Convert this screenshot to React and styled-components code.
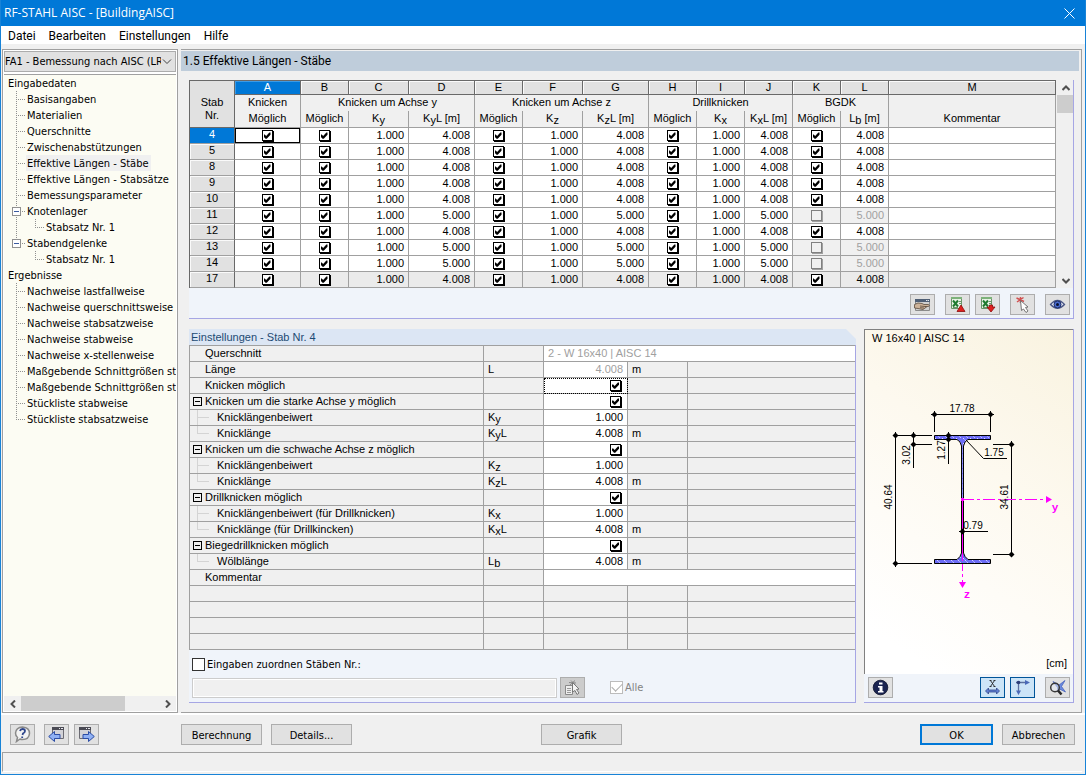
import React from "react";
import styled, { createGlobalStyle, css } from "styled-components";

const titleFont = '"Open Sans", "Segoe UI", sans-serif';
const menuFont = 'Roboto, "Segoe UI", sans-serif';
const dialogFont = '"DejaVu Sans Condensed", Tahoma, sans-serif';
const gridFont = '"Liberation Sans", Arial, sans-serif';

const Global = createGlobalStyle`
  * { box-sizing: border-box; }
  body { margin: 0; background: #f0f0f0; color: #000; font-family: ${dialogFont}; font-size: 11px; line-height: 16px; }
  button, input, select { font: inherit; color: inherit; margin: 0; padding: 0; border-radius: 0; }
  svg { display: block; }
`;

const Window = styled.div`
  display: flex;
  flex-direction: column;
  min-height: 100vh;
  background: #f0f0f0;
  border: 1px solid #1883d7;
  border-top: 0;
`;

const TitleBar = styled.header`
  display: flex;
  align-items: center;
  justify-content: space-between;
  height: 26px;
  padding: 0 8px 0 3px;
  background: #0078d7;
  color: #fff;
  font: 12px/16px ${titleFont};
`;

const Title = styled.h1`
  margin: 0;
  font-size: 12px;
  font-weight: 400;
`;

const CloseButton = styled.button`
  display: grid;
  place-items: center;
  width: 16px;
  height: 16px;
  border: 0;
  background: transparent;
`;

const MenuBar = styled.nav`
  display: flex;
  align-items: center;
  gap: 13px;
  height: 18px;
  padding: 2px 7px 0;
  background: #fff;
  font: 12px/16px ${menuFont};
`;

const MenuItem = styled.button`
  border: 0;
  background: transparent;
`;

const Main = styled.main`
  display: flex;
  flex: 1;
  gap: 3px;
  margin-top: 5px;
  padding: 0 3px 0 1px;
  border-bottom: 2px solid #fff;
`;

const Sidebar = styled.aside`
  display: flex;
  flex-direction: column;
  width: 176px;
  flex: none;
  padding: 1px;
  border: 1px solid #a0a0a0;
  background: #fff;
`;

const CasePicker = styled.label`
  display: grid;
  grid-template-columns: 1fr 13px;
  align-items: center;
  height: 21px;
  border: 1px solid #acacac;
  background: #e1e1e1;
  font-size: 11px;
`;

const CaseSelect = styled.select`
  grid-area: 1 / 1 / 2 / 3;
  appearance: none;
  width: 100%;
  height: 19px;
  padding: 1px 14px 0 0;
  border: 0;
  background: transparent;
`;

const PickerArrow = styled.span`
  grid-area: 1 / 2;
  pointer-events: none;
`;

const Tree = styled.ul`
  flex: 1;
  margin: 2px 0 0;
  padding: 0;
  list-style: none;
  overflow: hidden;
  border-top: 1px solid #a0a0a0;
  background: #fcfcf3;
`;

const TreeRow = styled.li`
  display: flex;
  align-items: center;
  height: 16px;
  padding-left: ${(p) => (p.$level ? 7 : 3)}px;
  white-space: nowrap;
`;

const TreeLabel = styled.span`
  height: 16px;
  padding: 0 2px 0 1px;
  line-height: 18px;
  background: ${(p) => (p.$selected ? "#f0f0f0" : "transparent")};
`;

const Connector = styled.svg`
  flex: none;
`;

const HScroll = styled.div`
  display: flex;
  align-items: center;
  height: 15px;
  background: #f0f0f0;
`;

const ScrollButton = styled.button`
  display: grid;
  place-items: center;
  flex: none;
  width: 17px;
  height: 15px;
  border: 0;
  background: transparent;
`;

const HTrack = styled.div`
  flex: 1;
  height: 100%;
`;

const HThumb = styled.div`
  width: 75%;
  height: 100%;
  background: #cdcdcd;
`;

const Workspace = styled.section`
  display: flex;
  flex-direction: column;
  flex: 1;
  min-width: 0;
  padding: 1px 2px 0 0;
  border: solid #a0a0a0;
  border-width: 1px 1px 1px 0;
`;

const PageTitle = styled.h2`
  height: 20px;
  margin: 0;
  padding: 0 2px;
  background: #bfcddb;
  font: 12px/20px ${menuFont};
`;

const Content = styled.div`
  display: flex;
  flex-direction: column;
  gap: 10px;
  padding: 9px 5px 9px 8px;
`;

const GridPanel = styled.div`
  border: 1px solid #a6a6e4;
  border-width: 0 1px 1px 0;
  background: #f0f4fa;
`;

const GridArea = styled.div`
  display: flex;
  gap: 1px;
  background: #f0f0f0;
`;

const VScroll = styled.div`
  display: flex;
  flex-direction: column;
  flex: none;
  width: 16px;
  background: #f0f0f0;
`;

const VTrack = styled.div`
  flex: 1;
`;

const VThumb = styled.div`
  height: 18px;
  background: #cdcdcd;
`;

const MemberTable = styled.table`
  flex: 1;
  min-width: 0;
  table-layout: fixed;
  border-collapse: separate;
  border-spacing: 0;
  border-left: 1px solid #696969;
  font: 11px/13px ${gridFont};
  white-space: nowrap;

  th, td { padding: 0; font-weight: 400; overflow: hidden; }
`;

const LetterCell = styled.th`
  height: 15px;
  border: solid #696969;
  border-width: 1px 1px 1px 0;
  background: ${(p) => (p.$active ? "#0078d7" : "#e1e1e1")};
  color: ${(p) => (p.$active ? "#fff" : "#000")};
  box-shadow: inset 1px 1px 0 ${(p) => (p.$active ? "#3c9be6" : "#fafafa")};
`;

const CornerCell = styled.th`
  border: solid #696969;
  border-width: 1px 1px 1px 0;
  background: #e1e1e1;

  &&& { padding-top: 9px; }
`;

const GroupCell = styled.th`
  height: 16px;
  border-right: 1px solid #a0a0a0;
  background: #f0f0f0;
  line-height: 15px;
  vertical-align: top;
`;

const SubCell = styled.th`
  height: 17px;
  border: solid #a0a0a0;
  border-width: 0 1px 1px 0;
  background: #f0f0f0;
  line-height: 15px;
  vertical-align: top;
`;

const RowHead = styled.th`
  height: 16px;
  border: solid #a0a0a0;
  border-width: 0 1px 1px 0;
  border-right-color: #696969;
  vertical-align: top;
  background: ${(p) => (p.$active ? "#0078d7" : "#e1e1e1")};
  color: ${(p) => (p.$active ? "#fff" : "#000")};
  box-shadow: inset 1px 1px 0 ${(p) => (p.$active ? "#0078d7" : "#fafafa")};
`;

const Cell = styled.td`
  height: 16px;
  border: solid #a0a0a0;
  border-width: 0 1px 1px 0;
  line-height: 15px;
  vertical-align: top;
  background: ${(p) => (p.$shade ? "#ebebeb" : p.$off ? "#f0f0f0" : "#fff")};
  color: ${(p) => (p.$off ? "#a0a0a0" : "#000")};
  text-align: ${(p) => (p.$number ? "right" : "center")};
  ${(p) => p.$number && css`&&& { padding-right: 4px; }`}
  ${(p) => p.$focus && css`box-shadow: inset 0 0 0 1px #000;`}
`;

const Tick = styled.input.attrs({ type: "checkbox" })`
  appearance: none;
  display: inline-block;
  vertical-align: top;
  width: 11px;
  height: 11px;
  margin: 2px 2px 0 1px;
  border: 1px solid #000;
  background: #fff;
  box-shadow: 1px 1px 0 #000;

  &:checked::before {
    content: "";
    display: block;
    width: 7px;
    height: 7px;
    margin: 1px;
    background: #000;
    clip-path: polygon(0 36%, 18% 36%, 38% 56%, 84% 7%, 100% 7%, 100% 38%, 46% 95%, 29% 95%, 0 66%);
  }

  &:disabled {
    border-color: #808080;
    background: #f0f0f0;
    box-shadow: 1px 1px 0 #a0a0a0;
  }
`;

const Sub = styled.span`
  position: relative;
  top: 2px;
`;

const ToolRow = styled.div`
  display: flex;
  justify-content: flex-end;
  gap: 10px;
  padding: 6px 3px 3px;
`;

const ToolGroup = styled.div`
  display: flex;
  gap: 5px;
`;

const IconButton = styled.button`
  display: grid;
  place-items: center;
  flex: none;
  width: 25px;
  height: 21px;
  border: 1px solid ${(p) => (p.$on ? "#005499" : "#adadad")};
  background: ${(p) => (p.$on ? "#cce4f7" : p.disabled ? "#cccccc" : "#e1e1e1")};
`;

const LowerRow = styled.div`
  display: flex;
  gap: 8px;
`;

const SettingsPanel = styled.div`
  flex: 1;
  min-width: 0;
`;

const SettingsTitle = styled.h3`
  height: 16px;
  margin: 0;
  padding: 0 2px;
  background: #dce6f4;
  color: #1c4a73;
  font: 11px/17px ${gridFont};
  clip-path: polygon(0 0, calc(100% - 10px) 0, 100% 10px, 100% 100%, 0 100%);
`;

const SettingsBody = styled.div`
  border: 1px solid #a6a6e4;
  border-width: 0 1px 1px 0;
  background: #f0f4fa;
`;

const PropTable = styled.table`
  width: 100%;
  table-layout: fixed;
  border-collapse: separate;
  border-spacing: 0;
  border: solid #a0a0a0;
  border-width: 1px 0 0 1px;
  font: 11px/14px ${gridFont};
  white-space: nowrap;
`;

const PropCell = styled.td`
  height: 16px;
  padding: 0 4px;
  border: solid #a0a0a0;
  border-width: 0 ${(p) => (p.$last ? 0 : 1)}px 1px 0;
  vertical-align: top;
  background: ${(p) => (p.$edit ? "#fff" : "#f0f0f0")};
  color: ${(p) => (p.$dim ? "#a0a0a0" : "#000")};
  text-align: ${(p) => (p.$number ? "right" : "left")};
  ${(p) => p.$focus && css`outline: 1px dotted #000; outline-offset: -1px;`}
`;

const PropName = styled.th`
  height: 16px;
  padding: 0;
  border: solid #a0a0a0;
  border-width: 0 1px 1px 0;
  background: #f0f0f0;
  font-weight: 400;
  text-align: left;
  vertical-align: top;
`;

const NameLine = styled.div`
  display: flex;
  height: 15px;
  padding-left: ${(p) => (p.$plain ? 15 : 3)}px;
`;

const BranchLine = styled.svg`
  flex: none;
  margin: 0 2px 0 4px;
`;

const Fold = styled.button`
  display: grid;
  place-items: center;
  width: 9px;
  height: 9px;
  margin: 3px 3px 3px 0;
  border: 1px solid #000;
  background: #f0f0f0;

  &::before { content: ""; width: 5px; height: 1px; background: #000; }
`;

const CommentInput = styled.input`
  display: block;
  width: 100%;
  height: 15px;
  border: 0;
  background: #fff;
`;

const AssignArea = styled.div`
  display: flex;
  flex-direction: column;
  gap: 6px;
  padding: 8px 3px 4px;
`;

const AssignLine = styled.div`
  display: flex;
  align-items: center;
`;

const CheckLabel = styled.label`
  display: flex;
  align-items: center;
  gap: 2px;
  height: 13px;
  color: ${(p) => (p.$off ? "#838383" : "#000")};
`;

const WinCheck = styled.input.attrs({ type: "checkbox" })`
  appearance: none;
  width: 13px;
  height: 13px;
  border: 1px solid #333;
  background: #fff;

  &:disabled { border-color: #bcbcbc; }

  &:checked::before {
    content: "";
    display: block;
    width: 9px;
    height: 5px;
    margin: 1px;
    border: solid #adadad;
    border-width: 0 0 1px 1px;
    transform: rotate(-45deg);
  }
`;

const AssignInput = styled.input`
  width: 365px;
  height: 20px;
  margin-right: 3px;
  border: 1px solid #ccc;
  background: #f0f0f0;
  box-shadow: inset 0 0 0 1px #fff;
`;

const AllBox = styled.div`
  margin-left: 25px;
`;

const SectionPanel = styled.div`
  display: flex;
  flex-direction: column;
  width: 210px;
  flex: none;
  border: 1px solid #a6a6e4;
  border-left: 0;
  border-top: 0;
  background: #f0f4fa;
`;

const SectionCanvas = styled.div`
  display: flex;
  flex-direction: column;
  flex: 1;
  border: solid #808080;
  border-width: 1px 0 0 1px;
  background: linear-gradient(215deg, #f9f3e0 0%, #fdf9ef 40%, #ffffff 90%);
  font: 11px/16px ${gridFont};
`;

const SectionName = styled.div`
  height: 18px;
  padding: 0 7px;
`;

const SectionDrawing = styled.svg`
  flex: 1;
  width: 100%;
  font-size: 10px;
`;

const SectionUnit = styled.div`
  height: 20px;
  padding: 1px 6px;
  text-align: right;
`;

const SectionTools = styled.div`
  display: flex;
  gap: 10px;
  padding: 3px 3px 4px 4px;
`;

const PushRight = styled(ToolGroup)`
  margin-left: auto;
`;

const Footer = styled.footer`
  display: flex;
  align-items: center;
  gap: 9px;
  padding: 9px 10px 7px 9px;
`;

const FooterLeft = styled.div`
  display: flex;
  gap: 9px;
  width: 162px;
`;

const Spacer = styled.div`
  flex: ${(p) => p.$grow};
`;

const PushButton = styled.button`
  width: ${(p) => p.$width || 81}px;
  height: 21px;
  padding-top: 2px;
  border: ${(p) => (p.$primary ? "2px solid #0078d7" : "1px solid #adadad")};
  background: #e1e1e1;
  line-height: 16px;
`;

const StatusBar = styled.div`
  height: 20px;
  margin: 0 3px 2px 1px;
  border: solid #a0a0a0;
  border-width: 1px 0 0 1px;
  border-bottom: 1px solid #fff;
`;

const Chevron = ({ d }) => (
  <svg width="8" height="8" viewBox="0 0 8 8" fill="none" stroke="#505050" strokeWidth="2">
    <path d={d} />
  </svg>
);

/* Tree connectors: the trunk, the branch and, for parents, the fold box. */
function TreeLines({ level, end, fold, trunk }) {
  const w = level === 2 ? 34 : 15;
  const x = level === 2 ? 24 : 5;
  return (
    <Connector width={w} height="16" viewBox={`0 0 ${w} 16`} fill="none" shapeRendering="crispEdges">
      <g stroke="#909090" strokeDasharray="1 1">
        {level === 2 && trunk && <path d="M5.5 0V16" />}
        <path d={`M${x + 0.5} 0V${end ? 8 : 16}M${x} 8.5H${x + 9}`} />
      </g>
      {fold && (
        <g>
          <rect x="1.5" y="4.5" width="8" height="8" rx="1" fill="#fff" stroke="#919191" />
          <path d="M3 8.5H8" stroke="#3b5ba0" />
        </g>
      )}
    </Connector>
  );
}

const treeRows = [
  { t: "Eingabedaten", l: 0 },
  { t: "Basisangaben", l: 1 },
  { t: "Materialien", l: 1 },
  { t: "Querschnitte", l: 1 },
  { t: "Zwischenabstützungen", l: 1 },
  { t: "Effektive Längen - Stäbe", l: 1, selected: true },
  { t: "Effektive Längen - Stabsätze", l: 1 },
  { t: "Bemessungsparameter", l: 1 },
  { t: "Knotenlager", l: 1, fold: true },
  { t: "Stabsatz Nr. 1", l: 2, end: true, trunk: true },
  { t: "Stabendgelenke", l: 1, fold: true, end: true },
  { t: "Stabsatz Nr. 1", l: 2, end: true },
  { t: "Ergebnisse", l: 0 },
  { t: "Nachweise lastfallweise", l: 1 },
  { t: "Nachweise querschnittsweise", l: 1 },
  { t: "Nachweise stabsatzweise", l: 1 },
  { t: "Nachweise stabweise", l: 1 },
  { t: "Nachweise x-stellenweise", l: 1 },
  { t: "Maßgebende Schnittgrößen sta", l: 1 },
  { t: "Maßgebende Schnittgrößen sta", l: 1 },
  { t: "Stückliste stabweise", l: 1 },
  { t: "Stückliste stabsatzweise", l: 1, end: true },
];

const letters = "ABCDEFGHIJKLM".split("");
const columnWidths = [45, 66, 48, 60, 66, 48, 60, 66, 48, 48, 48, 48, 48, null];

const members = [
  { nr: 4, len: "4.008" },
  { nr: 5, len: "4.008" },
  { nr: 8, len: "4.008" },
  { nr: 9, len: "4.008" },
  { nr: 10, len: "4.008" },
  { nr: 11, len: "5.000", off: true },
  { nr: 12, len: "4.008" },
  { nr: 13, len: "5.000", off: true },
  { nr: 14, len: "5.000", off: true },
  { nr: 17, len: "4.008" },
];

const Sym = ({ a, s, z }) => (
  <>
    {a}
    <Sub>{s}</Sub>
    {z}
  </>
);

function Members() {
  return (
    <MemberTable>
      <colgroup>
        {columnWidths.map((w, i) => (
          <col key={i} width={w || undefined} />
        ))}
      </colgroup>
      <thead>
        <tr>
          <CornerCell rowSpan={3}>
            Stab
            <br />
            Nr.
          </CornerCell>
          {letters.map((c) => (
            <LetterCell key={c} $active={c === "A"}>
              {c}
            </LetterCell>
          ))}
        </tr>
        <tr>
          <GroupCell>Knicken</GroupCell>
          <GroupCell colSpan={3}>Knicken um Achse y</GroupCell>
          <GroupCell colSpan={3}>Knicken um Achse z</GroupCell>
          <GroupCell colSpan={3}>Drillknicken</GroupCell>
          <GroupCell colSpan={2}>BGDK</GroupCell>
          <GroupCell />
        </tr>
        <tr>
          <SubCell>Möglich</SubCell>
          <SubCell>Möglich</SubCell>
          <SubCell><Sym a="K" s="y" /></SubCell>
          <SubCell><Sym a="K" s="y" z="L [m]" /></SubCell>
          <SubCell>Möglich</SubCell>
          <SubCell><Sym a="K" s="z" /></SubCell>
          <SubCell><Sym a="K" s="z" z="L [m]" /></SubCell>
          <SubCell>Möglich</SubCell>
          <SubCell><Sym a="K" s="x" /></SubCell>
          <SubCell><Sym a="K" s="x" z="L [m]" /></SubCell>
          <SubCell>Möglich</SubCell>
          <SubCell><Sym a="L" s="b" z=" [m]" /></SubCell>
          <SubCell>Kommentar</SubCell>
        </tr>
      </thead>
      <tbody>
        {members.map((m, i) => {
          const shade = i === members.length - 1;
          const tick = (name, extra = {}) => (
            <Cell $shade={shade} {...extra}>
              <Tick defaultChecked={!extra.$off} disabled={extra.$off} aria-label={`${name}, Stab ${m.nr}`} />
            </Cell>
          );
          const num = (v, off) => (
            <Cell $number $shade={shade} $off={off}>
              {v}
            </Cell>
          );
          return (
            <tr key={m.nr}>
              <RowHead scope="row" $active={i === 0}>{m.nr}</RowHead>
              {tick("Knicken möglich", { $focus: i === 0 })}
              {tick("Knicken um Achse y möglich")}
              {num("1.000")}
              {num(m.len)}
              {tick("Knicken um Achse z möglich")}
              {num("1.000")}
              {num(m.len)}
              {tick("Drillknicken möglich")}
              {num("1.000")}
              {num(m.len)}
              {tick("BGDK möglich", { $off: m.off })}
              {num(m.len, m.off)}
              <Cell $shade={shade} />
            </tr>
          );
        })}
      </tbody>
    </MemberTable>
  );
}

const K = (s, z) => <Sym a="K" s={s} z={z} />;
const settings = [
  { name: "Querschnitt", wide: "2 - W 16x40 | AISC 14" },
  { name: "Länge", sym: "L", value: "4.008", dim: true, unit: "m" },
  { name: "Knicken möglich", check: true, focus: true },
  { name: "Knicken um die starke Achse y möglich", fold: true, check: true },
  { name: "Knicklängenbeiwert", child: true, sym: K("y"), value: "1.000" },
  { name: "Knicklänge", child: true, end: true, sym: K("y", "L"), value: "4.008", unit: "m" },
  { name: "Knicken um die schwache Achse z möglich", fold: true, check: true },
  { name: "Knicklängenbeiwert", child: true, sym: K("z"), value: "1.000" },
  { name: "Knicklänge", child: true, end: true, sym: K("z", "L"), value: "4.008", unit: "m" },
  { name: "Drillknicken möglich", fold: true, check: true },
  { name: "Knicklängenbeiwert (für Drillknicken)", child: true, sym: K("x"), value: "1.000" },
  { name: "Knicklänge (für Drillkincken)", child: true, end: true, sym: K("x", "L"), value: "4.008", unit: "m" },
  { name: "Biegedrillknicken möglich", fold: true, check: true },
  { name: "Wölblänge", child: true, end: true, sym: <Sym a="L" s="b" />, value: "4.008", unit: "m" },
  { name: "Kommentar", comment: true },
  {}, {}, {}, {},
];

function Settings() {
  return (
    <PropTable>
      <colgroup>
        <col width="294" />
        <col width="60" />
        <col width="84" />
        <col width="60" />
        <col />
      </colgroup>
      <tbody>
        {settings.map((r, i) => (
          <tr key={i}>
            <PropName scope="row">
              <NameLine $plain={!r.fold && !r.child}>
                {r.fold && <Fold aria-label={`${r.name} einklappen`} />}
                {r.child && (
                  <BranchLine width="18" height="15" viewBox="0 0 18 15" fill="none" stroke="#d4d4d4">
                    <path d={`M0.5 0V${r.end ? 7 : 15}M0 7.5H12`} />
                  </BranchLine>
                )}
                {r.name}
              </NameLine>
            </PropName>
            <PropCell>{r.sym}</PropCell>
            {r.wide || r.comment ? (
              <PropCell $edit $dim $last colSpan={3}>
                {r.wide || <CommentInput aria-label="Kommentar" />}
              </PropCell>
            ) : (
              <>
                <PropCell $number $edit={!!r.name} $dim={r.dim} $focus={r.focus}>
                  {r.check ? <Tick defaultChecked aria-label={r.name} /> : r.value}
                </PropCell>
                <PropCell>{r.unit}</PropCell>
                <PropCell $last />
              </>
            )}
          </tr>
        ))}
      </tbody>
    </PropTable>
  );
}

const Dot = ({ x, y }) => (
  <path d={`M${x - 3} ${y}L${x} ${y - 3}L${x + 3} ${y}L${x} ${y + 3}Z`} fill="#000" stroke="none" />
);

function CrossSection() {
  return (
    <SectionDrawing viewBox="0 0 208 306" role="img" aria-label="W 16x40">
      <defs>
        <pattern id="hatch" width="7" height="5" patternUnits="userSpaceOnUse">
          <rect width="7" height="5" fill="#6c6cf6" />
          <path d="M0 0L5 5" stroke="#dcdcff" strokeDasharray="2 1" />
        </pattern>
      </defs>
      <g stroke="#000" fill="url(#hatch)">
        <path d="M69.5 87.5H125.5V91.5H103Q99.5 93 98.5 98V205Q99.5 209 103 211.5H125.5V215.5H69.5V211.5H92Q95.5 209 96.5 205V98Q95.5 93 92 91.5H69.5Z" />
      </g>
      <path d="M97.5 96V206" stroke="#8c8cf8" strokeDasharray="4 1" />
      <g stroke="#000" fill="none">
        <path d="M66 66.5H129M69.5 63V84M125.5 63V84" />
        <path d="M30.5 84V219M28 87.5H67M28 215.5H67" />
        <path d="M48.5 84V120M46 96.5H67" />
        <path d="M83.5 84V116" />
        <path d="M101 92L118.5 110.5H142" />
        <path d="M146.5 93V209M128 96.5H149M128 206.5H149" />
        <path d="M94 183.5H123" />
      </g>
      <Dot x={69.5} y={66.5} />
      <Dot x={125.5} y={66.5} />
      <Dot x={30.5} y={87.5} />
      <Dot x={30.5} y={215.5} />
      <Dot x={48.5} y={87.5} />
      <Dot x={48.5} y={96.5} />
      <Dot x={83.5} y={87.5} />
      <Dot x={83.5} y={91.5} />
      <Dot x={146.5} y={96.5} />
      <Dot x={146.5} y={206.5} />
      <g stroke="#f0f" fill="#f0f">
        <path d="M97 151.5H181" strokeDasharray="12 3 3 3" />
        <path d="M97.5 151V213" />
        <path d="M97.5 216V234" strokeDasharray="7 3 3 3" />
        <rect x="96" y="150" width="3" height="3" stroke="none" />
        <path d="M181 148L187 151.5L181 155Z" stroke="none" />
        <path d="M94 234L97.5 240L101 234Z" stroke="none" />
      </g>
      <Dot x={97.5} y={183.5} />
      <g fontFamily="Liberation Sans, Arial, sans-serif" textAnchor="middle" fill="#000">
        <text x="97" y="64">17.78</text>
        <text x="129" y="108">1.75</text>
        <text x="108" y="181">0.79</text>
        <text transform="translate(27 149) rotate(-90)">40.64</text>
        <text transform="translate(45 107) rotate(-90)">3.02</text>
        <text transform="translate(80 102) rotate(-90)">1.27</text>
        <text transform="translate(143 149) rotate(-90)">34.61</text>
      </g>
      <g fontFamily="'Liberation Mono', monospace" fontSize="11" fontWeight="700" fill="#f0f" textAnchor="middle">
        <text x="190" y="163">y</text>
        <text x="102" y="250">z</text>
      </g>
    </SectionDrawing>
  );
}

const Svg = ({ children }) => (
  <svg width="17" height="17" viewBox="0 0 17 17" fill="none">
    {children}
  </svg>
);

const HandIcon = () => (
  <Svg>
    <path d="M1.5 3.5H15.5V14.5H1.5Z" stroke="#8b8b8b" fill="#d0d0d0" />
    <path d="M1 3H16V6H1Z" fill="#4e5e75" />
    <path d="M12 4H13.5V5H12ZM14 4H15V5H14Z" fill="#dfe5ee" />
    <path d="M0.5 8.5L4 7L8 7.5L10 8.5H14.5Q16 9.5 14.5 10.5H11L12.5 11L9 13.5L4 12.5L0.5 12Z" fill="#cdb39a" stroke="#5a4a3c" strokeWidth="0.8" />
    <path d="M6 10L11 10.5M6 11.7L10 12" stroke="#5a4a3c" strokeWidth="0.8" />
  </Svg>
);

const Sheet = () => (
  <>
    <path d="M2.5 1.5H12.5V12.5H2.5Z" fill="#e8f2e6" stroke="#6a9468" />
    <path d="M2 1H13V3H2Z" fill="#7db27a" />
    <path d="M4 4.5L9 10.5M9 4.5L4 10.5" stroke="#1f7a30" strokeWidth="2" />
    <path d="M10 5.5H12M10 7.5H12M4 11.5H9" stroke="#6a9468" />
  </>
);

const ExportIcon = () => (
  <Svg>
    <Sheet />
    <path d="M12 9L16 15.5H8Z" fill="#e02020" stroke="#8a0d0d" strokeWidth="0.8" />
  </Svg>
);

const ImportIcon = () => (
  <Svg>
    <Sheet />
    <path d="M8 11H10.5V9H13.5V11H16L12 16Z" fill="#e02020" stroke="#8a0d0d" strokeWidth="0.8" />
  </Svg>
);

const PickIcon = () => (
  <Svg>
    <path d="M2.5 2L10 5.5M3 6L9.5 1.5M6.5 1V7" stroke="#d05050" strokeWidth="1.5" />
    <path d="M6.5 4.5L14 11L11.5 11.5L14 15L12 16.5L9.5 13L7.5 14.5Z" fill="#fff" stroke="#666" strokeWidth="0.9" />
  </Svg>
);

const EyeIcon = () => (
  <Svg>
    <path d="M1.5 8.5Q8.5 0.5 15.5 8.5Q8.5 16 1.5 8.5Z" fill="#dfe5f4" stroke="#4a5684" strokeWidth="1.3" />
    <circle cx="8.5" cy="8.5" r="3.5" fill="#4a6cd0" stroke="#1d2c66" />
    <circle cx="8.5" cy="8.5" r="1.5" fill="#0b1230" />
  </Svg>
);

const InfoIcon = () => (
  <Svg>
    <circle cx="8.5" cy="8.5" r="7.3" fill="#1a2350" stroke="#0a0f28" strokeWidth="0.8" />
    <path d="M7 3.5H10.5V5.5H7ZM6 7H10.5V12H11.5V13.5H6V12H7.5V8.5H6Z" fill="#fff" />
  </Svg>
);

const DimIcon = () => (
  <Svg>
    <path d="M5.5 1.5H7.5M9.5 1.5H11.5M5.5 7.5H7.5M9.5 7.5H11.5M6.5 1.5L10.5 7.5M10.5 1.5L6.5 7.5" stroke="#222" strokeWidth="0.9" />
    <path d="M1.5 12L4.5 9V11H12.5V9L15.5 12L12.5 15V13H4.5V15Z" fill="#5f7fd4" stroke="#34488a" strokeWidth="0.8" />
  </Svg>
);

const AxesIcon = () => (
  <Svg>
    <path d="M2 3.5H13M4.5 2V13" stroke="#5a6f9f" strokeWidth="1.3" />
    <path d="M11 1L16 3.5L11 6ZM2 11.5L4.5 16L7 11.5Z" fill="#4a69b8" />
    <circle cx="4.5" cy="3.5" r="1.8" fill="#2c3e78" />
  </Svg>
);

const ZoomIcon = () => (
  <Svg>
    <path d="M4 2.5L10 6L16 1.5L12.5 7.5L16.5 13L10.5 10L9 13L8.5 8.5Z" fill="#6d8be0" stroke="#3d5cb8" strokeWidth="0.7" />
    <circle cx="6" cy="8.5" r="4.3" stroke="#3a3a3a" strokeWidth="1.5" fill="#e8eef8" fillOpacity="0.5" />
    <path d="M9 11.5L12.5 15.5" stroke="#2a2a2a" strokeWidth="2.5" />
  </Svg>
);

const AssignIcon = () => (
  <Svg>
    <path d="M5 3.5L12 4M7 1.5L11 5.5M6 6L11 1.5" stroke="#8a8a8a" />
    <path d="M1.5 6.5H8.5V15.5H1.5Z" fill="#eee" stroke="#8a8a8a" />
    <path d="M3 9.5H7M3 11.5H7M3 13.5H7" stroke="#999" />
    <path d="M8.5 3.5L15 10L12.5 10.5L15 14L13 15.5L11 11.5L8.5 13Z" fill="#f4f4f4" stroke="#777" />
  </Svg>
);

const HelpIcon = () => (
  <Svg>
    <path d="M8.5 1Q15.5 1.5 15.5 7.5Q15 13.5 8.5 13.5Q7 13.5 6 13L2.5 15.5L3.5 11.5Q1.5 10 1.5 7Q2 1.5 8.5 1Z" fill="#f3f3f3" stroke="#8a8a8a" strokeWidth="1.5" />
    <path d="M6 5Q6.5 3 8.5 3Q11 3 11 5Q11 6.5 9 7.5L8.5 9M8.2 10.5V12" stroke="#2f468c" strokeWidth="1.8" />
  </Svg>
);

const PageArrowIcon = ({ forward }) => (
  <Svg>
    <path d={forward ? "M1.5 1.5H12.5V12.5H1.5Z" : "M4.5 1.5H15.5V12.5H4.5Z"} fill="#d3d3d8" stroke="#6c6c74" />
    <path d={forward ? "M1 1H13V4H1Z" : "M4 1H16V4H4Z"} fill="#4b4b55" />
    <path d={forward ? "M8 2.5H9M10 2.5H12" : "M11 2.5H12M13 2.5H15"} stroke="#e8e8ee" />
    <path
      d={forward ? "M5 8.5H10.5V5.5L16.3 10.5L10.5 15.5V12.5H5Z" : "M12 8.5H6.5V5.5L0.7 10.5L6.5 15.5V12.5H12Z"}
      fill="#8fb0f4"
      stroke="#2c4ca4"
    />
  </Svg>
);

export default function App() {
  return (
    <>
      <Global />
      <Window>
        <TitleBar>
          <Title>RF-STAHL AISC - [BuildingAISC]</Title>
          <CloseButton aria-label="Schließen">
            <svg width="11" height="11" viewBox="0 0 11 11" stroke="#fff">
              <path d="M0.5 0.5L10.5 10.5M10.5 0.5L0.5 10.5" />
            </svg>
          </CloseButton>
        </TitleBar>
        <MenuBar>
          {["Datei", "Bearbeiten", "Einstellungen", "Hilfe"].map((m) => (
            <MenuItem key={m}>{m}</MenuItem>
          ))}
        </MenuBar>
        <Main>
          <Sidebar>
            <CasePicker>
              <CaseSelect aria-label="Bemessungsfall">
                <option>FA1 - Bemessung nach AISC (LRFD)</option>
              </CaseSelect>
              <PickerArrow>
                <svg width="10" height="6" viewBox="0 0 10 6" fill="none" stroke="#404040">
                  <path d="M1 0.5L5 4.5L9 0.5" />
                </svg>
              </PickerArrow>
            </CasePicker>
            <Tree>
              {treeRows.map((r, i) => (
                <TreeRow key={i} $level={r.l}>
                  {r.l > 0 && <TreeLines level={r.l} end={r.end} fold={r.fold} trunk={r.trunk} />}
                  <TreeLabel $selected={r.selected}>{r.t}</TreeLabel>
                </TreeRow>
              ))}
            </Tree>
            <HScroll>
              <ScrollButton aria-label="Nach links"><Chevron d="M6 0.5L2.5 4L6 7.5" /></ScrollButton>
              <HTrack><HThumb /></HTrack>
              <ScrollButton aria-label="Nach rechts"><Chevron d="M2 0.5L5.5 4L2 7.5" /></ScrollButton>
            </HScroll>
          </Sidebar>
          <Workspace>
            <PageTitle>1.5 Effektive Längen - Stäbe</PageTitle>
            <Content>
              <GridPanel>
                <GridArea>
                  <Members />
                  <VScroll>
                    <ScrollButton aria-label="Nach oben"><Chevron d="M0.5 6L4 2.5L7.5 6" /></ScrollButton>
                    <VTrack><VThumb /></VTrack>
                    <ScrollButton aria-label="Nach unten"><Chevron d="M0.5 2L4 5.5L7.5 2" /></ScrollButton>
                  </VScroll>
                </GridArea>
                <ToolRow>
                  <IconButton aria-label="Auswahl"><HandIcon /></IconButton>
                  <ToolGroup>
                    <IconButton aria-label="Excel-Export"><ExportIcon /></IconButton>
                    <IconButton aria-label="Excel-Import"><ImportIcon /></IconButton>
                  </ToolGroup>
                  <IconButton aria-label="Stab wählen"><PickIcon /></IconButton>
                  <IconButton aria-label="Ansicht"><EyeIcon /></IconButton>
                </ToolRow>
              </GridPanel>
              <LowerRow>
                <SettingsPanel>
                  <SettingsTitle>Einstellungen - Stab Nr. 4</SettingsTitle>
                  <SettingsBody>
                    <Settings />
                    <AssignArea>
                      <CheckLabel>
                        <WinCheck />
                        Eingaben zuordnen Stäben Nr.:
                      </CheckLabel>
                      <AssignLine>
                        <AssignInput aria-label="Stäbe Nr." disabled />
                        <IconButton disabled aria-label="Stäbe wählen"><AssignIcon /></IconButton>
                        <AllBox>
                          <CheckLabel $off>
                            <WinCheck defaultChecked disabled />
                            Alle
                          </CheckLabel>
                        </AllBox>
                      </AssignLine>
                    </AssignArea>
                  </SettingsBody>
                </SettingsPanel>
                <SectionPanel>
                  <SectionCanvas>
                    <SectionName>W 16x40 | AISC 14</SectionName>
                    <CrossSection />
                    <SectionUnit>[cm]</SectionUnit>
                  </SectionCanvas>
                  <SectionTools>
                    <IconButton aria-label="Info"><InfoIcon /></IconButton>
                    <PushRight>
                      <IconButton $on aria-label="Bemaßung"><DimIcon /></IconButton>
                      <IconButton $on aria-label="Achsen"><AxesIcon /></IconButton>
                    </PushRight>
                    <IconButton aria-label="Zoom"><ZoomIcon /></IconButton>
                  </SectionTools>
                </SectionPanel>
              </LowerRow>
            </Content>
          </Workspace>
        </Main>
        <Footer>
          <FooterLeft>
            <IconButton aria-label="Hilfe"><HelpIcon /></IconButton>
            <ToolGroup>
              <IconButton aria-label="Zurück"><PageArrowIcon /></IconButton>
              <IconButton aria-label="Weiter"><PageArrowIcon forward /></IconButton>
            </ToolGroup>
          </FooterLeft>
          <PushButton>Berechnung</PushButton>
          <PushButton>Details...</PushButton>
          <Spacer $grow={11} />
          <PushButton>Grafik</PushButton>
          <Spacer $grow={18} />
          <PushButton $width={73} $primary>OK</PushButton>
          <PushButton $width={73}>Abbrechen</PushButton>
        </Footer>
        <StatusBar />
      </Window>
    </>
  );
}
